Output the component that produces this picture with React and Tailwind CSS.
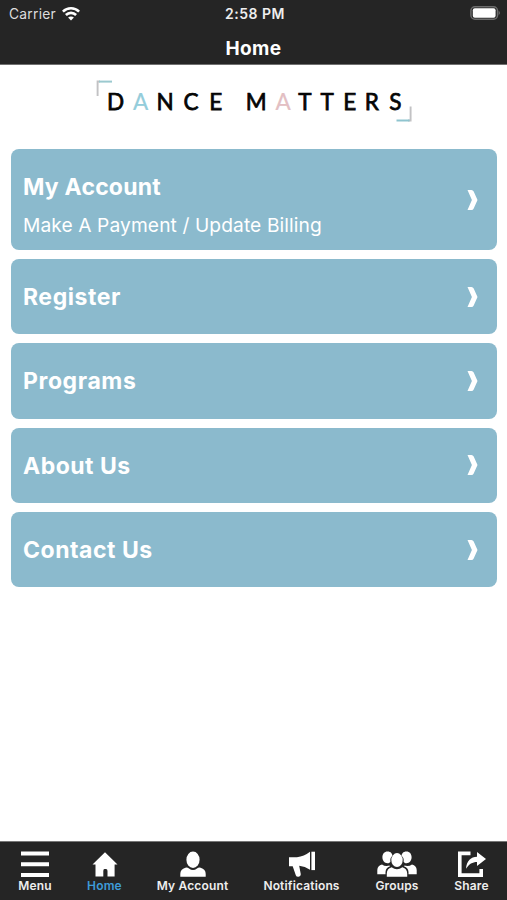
import React from "react";

const items = [
  { title: "My Account", sub: "Make A Payment / Update Billing", size: "h-[101px]", spacing: "tracking-[0.2px]" },
  { title: "Register", size: "h-[75.3px]", spacing: "tracking-[0.55px]" },
  { title: "Programs", size: "h-[75.3px]", spacing: "tracking-[0.6px]" },
  { title: "About Us", size: "h-[75.3px]", spacing: "tracking-[0.5px]" },
  { title: "Contact Us", size: "h-[75.3px]", spacing: "tracking-[0.52px]" },
];

function Wifi() {
  return (
    <svg className="ml-[6px] h-[14px] w-[18px]" viewBox="0 0 18 14" fill="none" stroke="#fff" strokeWidth="2.6">
      <path d="M0.9 4.6C5.5 0.2 12.5 0.2 17.1 4.6" />
      <path d="M3.9 8C6.8 5.1 11.2 5.1 14.1 8" />
      <path d="M9 13.4L6.1 10.6C7.7 9 10.3 9 11.9 10.6Z" fill="#fff" stroke="none" />
    </svg>
  );
}

function Battery() {
  return (
    <svg className="h-[15px] w-[31px]" viewBox="0 0 31 15">
      <rect x="0.9" y="0.8" width="26.6" height="12.4" rx="4" fill="#252525" stroke="#6c6c6c" strokeWidth="1.5" />
      <rect x="2.8" y="2.2" width="22.8" height="9.6" rx="2" fill="#fff" />
      <path d="M28.7 4.8Q31 7 28.7 9.2Z" fill="#747474" />
    </svg>
  );
}

function Logo() {
  return (
    <svg className="h-[46px] w-[320px]" viewBox="94 78 320 46" role="img" aria-label="Dance Matters">
      <path d="M97.6 96V81.5H100" fill="none" stroke="#c2c2c4" strokeWidth="1.9" />
      <path d="M99 81.6H112" fill="none" stroke="#9bc9cf" strokeWidth="2" />
      <path d="M410.6 106.5V120.5H408" fill="none" stroke="#c2c2c4" strokeWidth="1.9" />
      <path d="M396.5 120.5H409.6" fill="none" stroke="#8fc4cf" strokeWidth="2" />
      <g className="font-['Lato',sans-serif] text-[22.5px]" fill="#050505" stroke="#050505" strokeWidth="0.75">
        <text y="110" x="107">D</text>
        <text y="110" x="133" fill="#94cddb" stroke="#94cddb" strokeWidth="0.2">A</text>
        <text y="110" x="156.5 183.4 209.2">NCE</text>
        <text y="110" x="245.7">M</text>
        <text y="110" x="275.6" fill="#e3bfc3" stroke="#e3bfc3" strokeWidth="0.2">A</text>
        <text y="110" x="298.2 320.4 343.3 364.8 389.2">TTERS</text>
      </g>
    </svg>
  );
}

const icons = {
  menu: <path d="M1 2.5h28M1 13.2h28M1 23.9h28" stroke="#fff" strokeWidth="4" />,
  home: (
    <path d="M15 1.2L27.5 13.6H24.6V25.6H17.5V20Q17.5 18.1 16 18.1H14.5Q13.3 18.1 13.3 20V25.6H5.5V13.6H2.5Z" fill="#fff" />
  ),
  user: (
    <g fill="#fff">
      <ellipse cx="15" cy="8.8" rx="6.6" ry="8.2" />
      <path d="M2.3 25.8V23Q2.3 18 7.4 16.7Q9.6 16.3 11 17.5Q15 20.7 19 17.5Q20.4 16.3 22.6 16.7Q27.7 18 27.7 23V25.8Z" />
    </g>
  ),
  horn: (
    <g fill="#fff">
      <path d="M2 6.3H10Q17 5.5 23 0.8V18.7Q18 15.1 12.2 14.7L13.8 23.3Q13.8 25.4 11.5 25.8Q9.4 26 8.8 24.3L5.7 15.2H2Z" />
      <path d="M24.4 0.7H28V19.1H24.4Z" />
    </g>
  ),
  group: (
    <g fill="#fff">
      <path d="M10.5 0.6C14 0.6 15.5 3 15.3 5C13.7 6.2 13 8.2 13.4 10.7C12.5 12 11.7 12.3 10.5 12.3C7.5 12.3 5.4 9.5 5.4 6.3C5.4 3 7.4 0.6 10.5 0.6Z" />
      <path d="M29.5 0.6C26 0.6 24.5 3 24.7 5C26.3 6.2 27 8.2 26.6 10.7C27.5 12 28.3 12.3 29.5 12.3C32.5 12.3 34.6 9.5 34.6 6.3C34.6 3 32.6 0.6 29.5 0.6Z" />
      <path d="M0.3 23.3V19Q0.5 14.5 5 13.4Q8.3 15.8 12.6 14.5L12.8 15.6Q8.8 16.9 8.5 21V23.3Z" />
      <path d="M39.7 23.3V19Q39.5 14.5 35 13.4Q31.7 15.8 27.4 14.5L27.2 15.6Q31.2 16.9 31.5 21V23.3Z" />
      <ellipse cx="20" cy="9.1" rx="5.7" ry="7" />
      <path d="M9.8 25.8V22.5Q9.8 17.8 14.6 16.2Q20 20.3 25.4 16.2Q30.2 17.8 30.2 22.5V25.8Z" />
    </g>
  ),
  share: (
    <g>
      <path d="M13.5 2.4H2.8V24.1H24.2V18" fill="none" stroke="#fff" strokeWidth="3.6" />
      <path d="M9 17.7C9.6 9.5 14 5.9 20 5.7V0.9L29 8L20 15V10.9C15.5 10.9 12 12.9 9 17.7Z" fill="#fff" />
    </g>
  ),
};

const tabs = [
  { label: "Menu", icon: "menu", width: "w-[34px]" },
  { label: "Home", icon: "home", width: "w-[35px]", active: true },
  { label: "My Account", icon: "user", width: "w-[71px]" },
  { label: "Notifications", icon: "horn", width: "w-[77px]" },
  { label: "Groups", icon: "group", width: "w-[44px]" },
  { label: "Share", icon: "share", width: "w-[35px]" },
];

export default function App() {
  return (
    <div className="flex h-[900px] w-[507px] flex-col overflow-hidden bg-white font-['Inter',sans-serif]">
      <header className="h-[65px] shrink-0 border-b border-[#707070] bg-[#252525] text-white">
        <div className="grid h-[27px] grid-cols-[1fr_auto_1fr] items-center pr-[6px] pl-[9px]">
          <div className="flex items-center text-[13.8px] leading-[20px] tracking-[0.25px] text-[#ddd]">
            Carrier
            <Wifi />
          </div>
          <div className="text-center text-[14px] leading-[20px] font-semibold tracking-[0.5px] whitespace-nowrap text-[#eee]">
            2:58 PM
          </div>
          <div className="flex justify-end">
            <Battery />
          </div>
        </div>
        <h1 className="h-[37px] pt-[8px] text-center text-[19px] leading-[27px] font-bold tracking-[0.35px]">Home</h1>
      </header>
      <main className="flex-1">
        <div className="flex h-[84px] justify-center pt-[13px]">
          <Logo />
        </div>
        <div className="flex flex-col gap-[9px] pr-[10px] pl-[11px]">
          {items.map((item) => (
            <button
              key={item.title}
              className={`${item.size} flex shrink-0 items-center justify-between rounded-[8px] bg-[#8bbacd] pr-[19px] pl-[12px] text-left text-white`}
            >
              <span className={`${item.sub ? "pt-[12px]" : "pt-[1px]"} flex flex-col`}>
                <span className={`${item.spacing} text-[23px] leading-[38px] font-bold`}>{item.title}</span>
                {item.sub && <span className="text-[19.2px] leading-[38px] tracking-[0.1px]">{item.sub}</span>}
              </span>
              <svg className="h-[20px] w-[11px]" viewBox="0 0 11 20" fill="#fff">
                <path d="M0.5 0H4.4Q6 0 6.7 1.6L10.5 10L6.7 18.4Q6 20 4.4 20H0.5L4.9 10Z" />
              </svg>
            </button>
          ))}
        </div>
      </main>
      <nav className="flex h-[59px] shrink-0 justify-between border-t border-[#777] bg-[#252525] px-[18px] pt-[9px]">
        {tabs.map((tab) => (
          <div key={tab.label} className={`${tab.width} flex flex-col items-center`}>
            <svg
              className={`${tab.icon === "group" ? "w-[40px]" : "w-[30px]"} h-[27px] shrink-0`}
              viewBox={tab.icon === "group" ? "0 0 40 27" : "0 0 30 27"}
            >
              {icons[tab.icon]}
            </svg>
            <span
              className={`${tab.active ? "text-[#3e9bd8]" : "text-[#eee]"} text-[12px] leading-[16px] font-semibold tracking-[0.15px] whitespace-nowrap`}
            >
              {tab.label}
            </span>
          </div>
        ))}
      </nav>
    </div>
  );
}
